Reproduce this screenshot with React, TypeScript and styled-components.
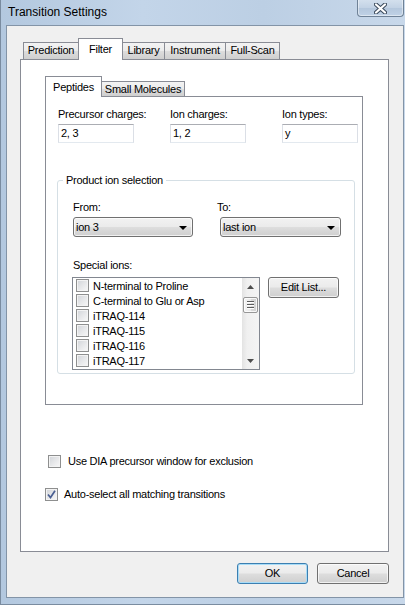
import React from "react";
import styled, { createGlobalStyle, css } from "styled-components";

const Global = createGlobalStyle`
  html, body { margin: 0; padding: 0; }
  body { width: 405px; height: 605px; overflow: hidden; background: #fff; }
  *, *::before, *::after { box-sizing: border-box; }
`;

const Window = styled.div`
  width: 405px;
  height: 605px;
  display: flex;
  flex-direction: column;
  background: linear-gradient(90deg, #b3c8df 0%, #c3d5e9 35%, #bccfe4 65%, #c8d8ea 100%);
  border-left: 1px solid #7a8ca0;
  border-bottom: 1px solid #7a8ca0;
  font-family: "Liberation Sans", Arial, sans-serif;
  font-size: 11px;
  letter-spacing: -0.25px;
  color: #000;
`;

const TitleBar = styled.div`
  height: 25px;
  flex: none;
  display: flex;
  justify-content: space-between;
  align-items: flex-start;
  padding-right: 1px;
`;

const Title = styled.div`
  font-size: 12px;
  letter-spacing: 0;
  line-height: 15px;
  padding: 5px 0 0 7px;
  color: #000;
`;

const CloseBtn = styled.div`
  width: 47px;
  height: 18px;
  margin-top: -1px;
  border: 1px solid #6f8297;
  border-top: none;
  border-radius: 0 0 4px 4px;
  background: linear-gradient(180deg, #d5e1ee 0%, #c3d3e5 50%, #b3c6dc 51%, #c0d2e6 100%);
  box-shadow: inset 0 0 0 1px rgba(255, 255, 255, 0.45);
  display: flex;
  align-items: center;
  justify-content: center;
  padding-top: 1px;
`;

const Body = styled.div`
  flex: 1;
  display: flex;
  padding: 0 1px 6px 5px;
`;

const Client = styled.div`
  flex: 1;
  display: flex;
  flex-direction: column;
  background: #f0f0f0;
  border: 1px solid #8394a7;
  padding: 12px 0 0 13px;
`;

const TabControl = styled.div<{ $w: number }>`
  width: ${(p) => p.$w}px;
  display: flex;
  flex-direction: column;
`;

const TabStrip = styled.div<{ $h: number; $pl: number }>`
  height: ${(p) => p.$h}px;
  display: flex;
  align-items: flex-end;
  padding-left: ${(p) => p.$pl}px;
  position: relative;
  z-index: 1;
`;

const Tab = styled.div<{ $w: number; $sel?: boolean; $h: number }>`
  width: ${(p) => p.$w}px;
  height: ${(p) => p.$h}px;
  border: 1px solid #898c95;
  border-bottom: none;
  text-align: center;
  white-space: nowrap;
  line-height: 13px;
  & + & { margin-left: -1px; }
  ${(p) =>
    p.$sel
      ? css`
          background: #fff;
          margin-bottom: -1px;
          padding-top: 4px;
          position: relative;
          z-index: 2;
        `
      : css`
          background: linear-gradient(180deg, #f3f3f3 0%, #ebebeb 50%, #dddddd 51%, #cfcfcf 100%);
          padding-top: 1px;
        `}
`;

const TabPage = styled.div<{ $h: number; $pad: string }>`
  height: ${(p) => p.$h}px;
  border: 1px solid #898c95;
  background: #fff;
  padding: ${(p) => p.$pad};
  display: flex;
  flex-direction: column;
`;

const FieldsGrid = styled.div`
  display: grid;
  grid-template-columns: 112px 112px 112px;
  row-gap: 3px;
`;

const Label = styled.div`
  line-height: 13px;
  white-space: nowrap;
`;

const TextBox = styled.div`
  width: 76px;
  height: 19px;
  border: 1px solid #dbdfe6;
  border-top-color: #abadb3;
  border-bottom-color: #e3e9ef;
  background: #fff;
  padding-left: 2px;
  line-height: 17px;
`;

const Group = styled.fieldset`
  margin: 31px 0 0 -1px;
  width: 298px;
  height: 200px;
  border: 1px solid #d5dfe5;
  border-radius: 3px;
  padding: 0 0 0 15px;
  min-width: 0;
`;

const Legend = styled.legend`
  padding: 0 3px;
  margin-left: -10px;
  line-height: 13px;
`;

const ComboGrid = styled.div`
  margin-top: 14px;
  display: grid;
  grid-template-columns: 144px auto;
  row-gap: 3px;
`;

const winButton = css`
  border: 1px solid #707070;
  border-radius: 3px;
  background: linear-gradient(180deg, #f2f2f2 0%, #ebebeb 48%, #dddddd 52%, #cfcfcf 100%);
  box-shadow: inset 0 0 0 1px rgba(255, 255, 255, 0.7);
`;

const Combo = styled.div<{ $w: number; $ml?: number }>`
  ${winButton};
  width: ${(p) => p.$w}px;
  height: 20px;
  margin-left: ${(p) => p.$ml || 0}px;
  display: flex;
  align-items: center;
  justify-content: space-between;
  padding: 0 5px 0 2px;
  line-height: 13px;
`;

const Arrow = styled.span`
  width: 0;
  height: 0;
  border-left: 4px solid transparent;
  border-right: 4px solid transparent;
  border-top: 4px solid #000;
  margin-top: 1px;
`;

const SpecialLabel = styled(Label)`
  margin-top: 22px;
`;

const ListRow = styled.div`
  margin-top: 5px;
  display: flex;
  align-items: flex-start;
`;

const ListBox = styled.div`
  width: 188px;
  height: 93px;
  margin-left: -1px;
  border: 1px solid #828790;
  background: #fff;
  display: flex;
`;

const Items = styled.div`
  flex: 1;
  display: flex;
  flex-direction: column;
`;

const Item = styled.div`
  height: 15px;
  display: flex;
  align-items: center;
  padding-left: 3px;
  gap: 4px;
  white-space: nowrap;
`;

const Check = styled.span`
  flex: none;
  width: 13px;
  height: 13px;
  border: 1px solid #8e8f8f;
  background: linear-gradient(135deg, #d0d3d8 0%, #e6e7e9 50%, #f8f8f8 100%);
  box-shadow: inset 0 0 0 1px #f3f3f3;
  display: flex;
  align-items: center;
  justify-content: center;
`;

const ScrollBar = styled.div`
  width: 17px;
  flex: none;
  display: flex;
  flex-direction: column;
  align-items: center;
  background: linear-gradient(90deg, #e3e3e3 0%, #f0f0f0 30%, #f4f4f4 100%);
`;

const ScrollArrow = styled.div`
  height: 17px;
  width: 17px;
  display: flex;
  align-items: center;
  justify-content: center;
`;

const Thumb = styled.div`
  width: 15px;
  height: 16px;
  margin-top: 2px;
  border: 1px solid #979797;
  border-radius: 2px;
  background: linear-gradient(90deg, #f4f4f4 0%, #e9e9e9 50%, #d9d9d9 51%, #d3d3d3 100%);
  box-shadow: inset 0 0 0 1px rgba(255, 255, 255, 0.8);
  display: flex;
  flex-direction: column;
  align-items: center;
  justify-content: center;
  gap: 1px;
`;

const Grip = styled.span`
  width: 7px;
  height: 1px;
  background: #5c5c5c;
  box-shadow: 0 1px 0 #fff;
  margin-bottom: 1px;
`;

const Spacer = styled.div`
  flex: 1;
`;

const Button = styled.div<{ $w: number; $default?: boolean; $ml?: number }>`
  ${winButton};
  width: ${(p) => p.$w}px;
  height: 21px;
  margin-left: ${(p) => p.$ml || 0}px;
  display: flex;
  align-items: center;
  justify-content: center;
  line-height: 13px;
  ${(p) =>
    p.$default &&
    css`
      border-color: #3c7fb1;
      box-shadow: inset 0 0 0 1px #a8dcf7;
    `}
`;

const CheckRow = styled.div<{ $mt: number; $pl: number; $gap: number }>`
  margin-top: ${(p) => p.$mt}px;
  padding-left: ${(p) => p.$pl}px;
  display: flex;
  align-items: center;
  gap: ${(p) => p.$gap}px;
  line-height: 13px;
`;

const ButtonRow = styled.div`
  margin-top: 11px;
  width: 369px;
  display: flex;
  justify-content: flex-end;
  gap: 9px;
`;

const CloseGlyph = () => (
  <svg width="13" height="11" viewBox="0 0 13 11">
    <path d="M2 1.5 L11 9.5 M11 1.5 L2 9.5" stroke="#3b4a5c" strokeWidth="4.2" strokeLinecap="round" />
    <path d="M2 1.5 L11 9.5 M11 1.5 L2 9.5" stroke="#fff" strokeWidth="2.2" strokeLinecap="round" />
  </svg>
);

const CheckMark = () => (
  <svg width="9" height="9" viewBox="0 0 9 9">
    <path d="M1 4.5 L3.5 7.5 L8 0.8" fill="none" stroke="#4a5f92" strokeWidth="1.7" />
  </svg>
);

const UpTri = () => (
  <svg width="7" height="4" viewBox="0 0 7 4">
    <path d="M0 4 L3.5 0 L7 4 Z" fill="#4d4d4d" />
  </svg>
);

const DownTri = () => (
  <svg width="7" height="4" viewBox="0 0 7 4">
    <path d="M0 0 L3.5 4 L7 0 Z" fill="#4d4d4d" />
  </svg>
);

const outerTabs = [
  { label: "Prediction", w: 56 },
  { label: "Filter", w: 45, sel: true },
  { label: "Library", w: 43 },
  { label: "Instrument", w: 62 },
  { label: "Full-Scan", w: 55 },
];

const specialIons = [
  "N-terminal to Proline",
  "C-terminal to Glu or Asp",
  "iTRAQ-114",
  "iTRAQ-115",
  "iTRAQ-116",
  "iTRAQ-117",
];

export default function App() {
  return (
    <>
      <Global />
      <Window>
        <TitleBar>
          <Title>Transition Settings</Title>
          <CloseBtn>
            <CloseGlyph />
          </CloseBtn>
        </TitleBar>
        <Body>
          <Client>
            <TabControl $w={369}>
              <TabStrip $h={21} $pl={3}>
                {outerTabs.map((t) => (
                  <Tab key={t.label} $w={t.w} $sel={t.sel} $h={t.sel ? 22 : 17}>
                    {t.label}
                  </Tab>
                ))}
              </TabStrip>
              <TabPage $h={493} $pad="16px 0 0 24px">
                <TabControl $w={318}>
                  <TabStrip $h={20} $pl={0}>
                    <Tab $w={57} $sel $h={21}>
                      Peptides
                    </Tab>
                    <Tab $w={84} $h={15}>
                      Small Molecules
                    </Tab>
                  </TabStrip>
                  <TabPage $h={309} $pad="11px 0 0 12px">
                    <FieldsGrid>
                      <Label>Precursor charges:</Label>
                      <Label>Ion charges:</Label>
                      <Label>Ion types:</Label>
                      <TextBox>2, 3</TextBox>
                      <TextBox>1, 2</TextBox>
                      <TextBox>y</TextBox>
                    </FieldsGrid>
                    <Group>
                      <Legend>Product ion selection</Legend>
                      <ComboGrid>
                        <Label>From:</Label>
                        <Label>To:</Label>
                        <Combo $w={120}>
                          ion 3
                          <Arrow />
                        </Combo>
                        <Combo $w={121} $ml={3}>
                          last ion
                          <Arrow />
                        </Combo>
                      </ComboGrid>
                      <SpecialLabel>Special ions:</SpecialLabel>
                      <ListRow>
                        <ListBox>
                          <Items>
                            {specialIons.map((s) => (
                              <Item key={s}>
                                <Check />
                                {s}
                              </Item>
                            ))}
                          </Items>
                          <ScrollBar>
                            <ScrollArrow>
                              <UpTri />
                            </ScrollArrow>
                            <Thumb>
                              <Grip />
                              <Grip />
                              <Grip />
                            </Thumb>
                            <Spacer />
                            <ScrollArrow>
                              <DownTri />
                            </ScrollArrow>
                          </ScrollBar>
                        </ListBox>
                        <Button $w={71} $ml={8}>
                          Edit List...
                        </Button>
                      </ListRow>
                    </Group>
                  </TabPage>
                </TabControl>
                <CheckRow $mt={50} $pl={3} $gap={7}>
                  <Check />
                  Use DIA precursor window for exclusion
                </CheckRow>
                <CheckRow $mt={20} $pl={0} $gap={6}>
                  <Check>
                    <CheckMark />
                  </Check>
                  Auto-select all matching transitions
                </CheckRow>
              </TabPage>
            </TabControl>
            <ButtonRow>
              <Button $w={71} $default>
                OK
              </Button>
              <Button $w={72}>Cancel</Button>
            </ButtonRow>
          </Client>
        </Body>
      </Window>
    </>
  );
}
